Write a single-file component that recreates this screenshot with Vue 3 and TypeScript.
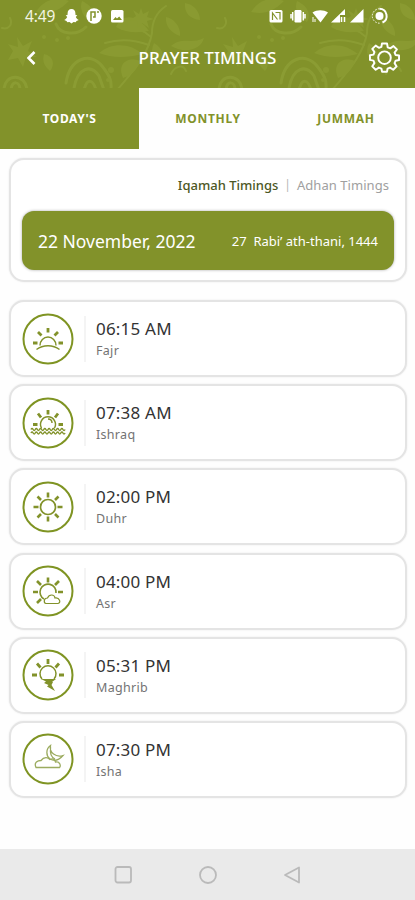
<script setup lang="ts">
import { ref } from 'vue'

type Icon = 'fajr' | 'ishraq' | 'duhr' | 'asr' | 'maghrib' | 'isha'

interface Prayer {
  name: string
  time: string
  icon: Icon
}

const tabs = ["TODAY'S", 'MONTHLY', 'JUMMAH']
const activeTab = ref(0)

const prayers: Prayer[] = [
  { name: 'Fajr', time: '06:15 AM', icon: 'fajr' },
  { name: 'Ishraq', time: '07:38 AM', icon: 'ishraq' },
  { name: 'Duhr', time: '02:00 PM', icon: 'duhr' },
  { name: 'Asr', time: '04:00 PM', icon: 'asr' },
  { name: 'Maghrib', time: '05:31 PM', icon: 'maghrib' },
  { name: 'Isha', time: '07:30 PM', icon: 'isha' },
]
</script>

<template>
  <div class="screen">
    <header class="header">
      <svg class="floral" viewBox="0 0 415 88" aria-hidden="true">
        <defs>
          <g id="floral-tile">
            <g fill="none" stroke="#94a53c" stroke-width="3" stroke-linecap="round">
              <path d="M66 83C70 57 91 52 102 66S111 83 111 90" />
              <path d="M74 88C78 67 91 64 99 76L104 90" />
              <path d="M84 90C87 78 93 79 96 90" />
              <path d="M4 90C4 73 26 73 27 90M11 90C12 80 20 81 20 90" />
              <path d="M56 24C60 35 77 36 86 27" />
              <path d="M118 89C132 72 148 56 152 33C152 21 157 12 166 6" stroke-width="2" />
              <path d="M151 37C142 29 132 25 120 26M149 45C133 39 118 39 105 43" stroke-width="2" />
              <path d="M171 74C174 67 183 63 186 71M2 28C9 30 13 24 10 18" stroke-width="2" />
            </g>
            <g fill="#91a237">
              <path d="M99 53C113 41 131 44 143 54C126 58 112 58 99 53Z" />
              <path d="M123 78C117 65 126 56 140 61C137 70 131 76 123 78Z" />
              <path d="M116 27C124 10 140 18 149 31C137 33 126 33 116 27Z" />
              <path d="M154 43C163 48 165 57 161 64C152 59 150 52 154 43Z" />
              <path d="M166 17C173 18 181 26 180 36C171 33 165 26 166 17Z" />
              <path d="M171 46C183 36 190 45 204 38C201 50 185 54 171 46Z" />
              <path d="M44 54C54 56 55 65 50 71C44 66 42 61 44 54Z" />
              <path d="M17 37L23 46L32 41L28 51L37 57L26 57L23 67L18 58L8 60L13 51L8 44L18 47Z" />
              <path d="M141 8L143 14L149 11L147 17L154 19L147 21L149 28L142 23L138 28L137 21L130 20L136 16L133 10L139 14Z" />
              <path d="M36 12C43 0 56-4 69 1C59 11 49 15 36 12Z" />
              <path d="M82 1C91 5 97 13 92 22C83 18 79 9 82 1Z" />
              <path d="M185 3C193 4 200 11 200 20C190 19 184 13 185 3Z" />
              <circle cx="57" cy="40" r="2" /><circle cx="68" cy="38" r="2" />
              <circle cx="111" cy="70" r="3" /><circle cx="108" cy="80" r="2" />
              <circle cx="44" cy="37" r="2" />
            </g>
          </g>
        </defs>
        <use href="#floral-tile" />
        <use href="#floral-tile" x="215" />
      </svg>

      <div class="status">
        <span class="clock">4:49</span>
        <svg class="status-left" viewBox="0 0 62 18" fill="#fff">
          <path d="M8.500 2C6 2 4.600 3.800 4.600 6.300L4.500 8L2.700 8.300L4.200 10C3.500 11.400 2.600 12.300 1.200 13L3.500 14L4.300 15.200L6.500 15L8.500 16.500L10.500 15L12.700 15.200L13.500 14L15.800 13C14.400 12.300 13.500 11.400 12.800 10L14.300 8.300L12.500 8L12.400 6.300C12.400 3.800 11 2 8.500 2Z" />
          <circle cx="31" cy="9" r="7.700" />
          <path d="M28 14V5H32V10H30M34 5H36" fill="none" stroke="#82922a" stroke-width="1.500" />
          <rect x="48" y="3" width="12.500" height="12.500" rx="1.500" />
          <path d="M50 13L52.500 10L54 11.500L56.200 9.500L59 13Z" fill="#82922a" />
        </svg>
        <svg class="status-right" viewBox="0 0 120 18" fill="#fff">
          <rect x="0.500" y="3" width="13" height="12.500" rx="1.500" />
          <path d="M3.500 13V6L8.500 12.500M6.500 5.500H11V12.500" fill="none" stroke="#82922a" stroke-width="1.200" />
          <rect x="25.500" y="3" width="7" height="12.500" rx="1.200" />
          <path d="M23.700 5V13.500M34.300 5V13.500M22 7V11.500M36 7V11.500" stroke="#fff" stroke-width="1.500" />
          <path d="M43.500 5.500C48 2.600 54.500 2.600 59 5.500L51.500 15.500Z" />
          <path d="M44 10V15M46 12V15" stroke="#fff" />
          <path d="M76 2V8H71V15.500H62Z" />
          <path d="M72.500 10V15M75.500 10V15" stroke="#fff" stroke-width="1.500" />
          <path d="M94.500 2V15.500H81Z" />
          <circle cx="110.500" cy="9" r="4" />
          <path d="M110.500 1.800A7.200 7.200 0 0 1 113.500 15.500" fill="none" stroke="#fff" stroke-width="2" />
          <path d="M110.500 16.200A7.200 7.200 0 0 1 110.500 1.800" fill="none" stroke="#fff" stroke-dasharray="1.500 1.500" />
        </svg>
      </div>

      <div class="title-row">
        <button class="icon-button back" aria-label="Back">
          <svg viewBox="0 0 12 16"><path d="M9.500 2L3.500 8L9.500 14" fill="none" stroke="#fff" stroke-width="2.600" /></svg>
        </button>
        <h1>PRAYER TIMINGS</h1>
        <button class="icon-button gear" aria-label="Settings">
          <svg viewBox="0 0 32 32" fill="none" stroke="#fff" stroke-width="2" stroke-linejoin="round">
            <path d="M13.400 1.500H18.600L19.300 5.500L22 6.600L25.300 4.200L28.800 7.700L26.400 11L27.500 13.400L31 14V18.600L27.500 19.300L26.400 21.800L28.500 25.200L25 28.600L21.700 26.400L19.200 27.400L18.500 30.700H13.500L12.800 27.400L10.200 26.400L6.900 28.600L3.400 25.100L5.600 21.800L4.600 19.200L1 18.500V13.700L4.600 13L5.600 10.400L3.400 7.100L6.900 3.700L10.200 6L12.800 5Z" />
            <circle cx="16" cy="16.200" r="6.500" />
          </svg>
        </button>
      </div>
    </header>

    <nav class="tabs">
      <button
        v-for="(tab, i) in tabs"
        :key="tab"
        class="tab"
        :class="{ active: i === activeTab }"
        @click="activeTab = i"
      >
        <span>{{ tab }}</span>
      </button>
    </nav>

    <main class="content">
      <section class="date-card">
        <div class="switch">
          <span class="iqamah">Iqamah Timings</span>
          <span class="bar">|</span>
          <span class="adhan">Adhan Timings</span>
        </div>
        <div class="date">
          <span class="gregorian">22 November, 2022</span>
          <span class="hijri">27&nbsp; Rabi’ ath-thani, 1444</span>
        </div>
      </section>

      <section class="list">
        <article v-for="p in prayers" :key="p.name" class="prayer">
          <svg class="badge" viewBox="0 0 52 52" fill="none" stroke="#82922a" stroke-width="1.200">
            <circle cx="26" cy="26" r="24.500" stroke="#7f9423" stroke-width="2" />
            <g v-if="p.icon === 'fajr'">
              <path d="M18 32.500A8 8.500 0 0 1 34 32.500M14.500 36.500C21 31.500 31 31.500 37.500 36.500" stroke-width="1.500" />
              <path d="M26 15V19.500M16 19L19.500 22.500M36 19L32.500 22.500M11 30H15.500M36.500 30H41" stroke-width="2.800" />
            </g>
            <g v-else-if="p.icon === 'ishraq'">
              <path d="M19.500 31A7.500 7.500 0 1 1 32.500 31M26 22C29 22 30 24 30 26" stroke-width="1.500" />
              <path d="M26 13V17.500M16 16.500L19 20.500M36 16.500L33 20.500M11 27.500H15.500M36.500 27.500H41" stroke-width="2.800" />
              <path d="M9 32.500q1.060 -2 2.130 0t2.130 0t2.130 0t2.130 0t2.130 0t2.130 0t2.130 0t2.130 0t2.130 0t2.130 0t2.130 0t2.130 0t2.130 0t2.130 0t2.130 0t2.130 0M9 36q1.060 -2 2.130 0t2.130 0t2.130 0t2.130 0t2.130 0t2.130 0t2.130 0t2.130 0t2.130 0t2.130 0t2.130 0t2.130 0t2.130 0t2.130 0t2.130 0t2.130 0" stroke-width="1.400" />
            </g>
            <g v-else-if="p.icon === 'duhr'">
              <circle cx="26" cy="26" r="7.500" stroke-width="1.700" />
              <path d="M26 11.500V16.500M26 35.500V40.500M11.500 26H16.500M35.500 26H40.500M15.500 15.500L19 19M33 33L36.500 36.500M15.500 36.500L19 33M33 19L36.500 15.500" stroke-width="2.600" />
            </g>
            <g v-else-if="p.icon === 'asr'">
              <path d="M22 34A8 8 0 1 1 34 28" stroke-width="1.600" />
              <path d="M24 38.500C21.500 38 21.500 33 25.500 33C27 29 32.500 29 33 33C37.500 32 39.500 38 36 38.500Z" />
              <path d="M26 12.500V17.500M11 27H16M36 27H41M15 16L19 20M37 16L33 20M15 38L19 34" stroke-width="2.600" />
            </g>
            <g v-else-if="p.icon === 'maghrib'">
              <path d="M20 30A8 8 0 1 1 32 30" stroke-width="1.500" />
              <path d="M26 10V15M15 14.500L18.500 18.500M37 14.500L33.500 18.500M10 26H15M37 26H42" stroke-width="2.800" />
              <path d="M19 30H34L30 33H31L29.500 36L33 42L25 37.500L26.500 36L22 34L24 32.500Z" fill="#82922a" stroke="none" />
            </g>
            <g v-else stroke="#9bab5f" stroke-width="1.300">
              <path d="M14 34.500C11.500 29 16 27.500 19 27.500C22 23.500 26 24 28 26.500C32 24.500 33 27.500 33.500 29C38 28 39 33 37.500 34.500Z" />
              <path d="M28.500 12.500C23.500 16 24 23 28 26C33 29 38 26 41 22.500C34 24.500 27 20 28.500 12.500ZM28.500 14C28 21 29 24 33 26" />
            </g>
          </svg>
          <div class="details">
            <strong>{{ p.time }}</strong>
            <span>{{ p.name }}</span>
          </div>
        </article>
      </section>
    </main>

    <footer class="navbar">
      <svg viewBox="0 0 20 20"><rect x="2.500" y="2" width="15.500" height="15.500" rx="2" /></svg>
      <svg viewBox="0 0 20 20"><circle cx="10" cy="10" r="8" /></svg>
      <svg viewBox="0 0 20 20"><path d="M17 2.500V17.500L3 10Z" /></svg>
    </footer>
  </div>
</template>

<style>
body {
  background: #fefefe;
}
</style>

<style scoped>
.screen {
  width: 415px;
  height: 900px;
  display: flex;
  flex-direction: column;
  overflow: hidden;
  background: #fefefe;
  font-family: 'Noto Sans', sans-serif;
}
.screen * {
  box-sizing: border-box;
}
button {
  border: 0;
  padding: 0;
  background: none;
  font: inherit;
}
svg {
  display: block;
}
.header {
  position: relative;
  height: 88px;
  flex: none;
  background: #82922a;
  color: #fff;
}
.floral {
  position: absolute;
  inset: 0;
  width: 415px;
  height: 88px;
  overflow: hidden;
  opacity: 0.55;
}
.status {
  position: relative;
  display: flex;
  align-items: center;
  height: 32px;
  padding: 0 26px 0 25px;
}
.clock {
  width: 38px;
  font-size: 15.5px;
  letter-spacing: -0.1px;
  color: #f3f5e4;
}
.status-left {
  width: 62px;
  height: 18px;
}
.status-right {
  width: 120px;
  height: 18px;
  margin-left: auto;
}
.title-row {
  position: relative;
  display: grid;
  grid-template-columns: 60px 1fr 60px;
  align-items: center;
  height: 51px;
}
h1 {
  margin: 0;
  text-align: center;
  font-size: 17px;
  font-weight: 500;
  letter-spacing: 0;
  white-space: nowrap;
}
.back svg {
  width: 12px;
  height: 16px;
  margin-left: 25px;
}
.gear svg {
  width: 31px;
  height: 31px;
  margin-left: 14px;
}
.tabs {
  display: grid;
  grid-template-columns: 139px 1fr 1fr;
  height: 61px;
  flex: none;
}
.tab {
  color: #82922a;
  font-size: 12px;
  font-weight: 700;
  letter-spacing: 0.7px;
}
.tab.active {
  background: #82922a;
  color: #fff;
  letter-spacing: 0.6px;
}
.content {
  flex: 1;
  padding: 9px 8px 0 9px;
}
.date-card,
.prayer {
  border: 2px solid #e4e4e4;
  border-radius: 15px;
  background: #fff;
  box-shadow: 0 0 2px #e8e8e8;
}
.date-card {
  height: 124px;
  padding: 15px 11px 0;
}
.switch {
  display: flex;
  justify-content: flex-end;
  height: 36px;
  padding-right: 5px;
  line-height: 20px;
  font-size: 13px;
  white-space: nowrap;
}
.iqamah {
  color: #4c5724;
  font-weight: 500;
}
.bar {
  margin: 0 6px;
  color: #b5b5b5;
  font-size: 12px;
}
.adhan {
  color: #a0a0a0;
  letter-spacing: 0.05px;
}
.date {
  display: flex;
  align-items: center;
  justify-content: space-between;
  height: 59px;
  padding: 0 16px;
  border-radius: 12px;
  background: #82922a;
  box-shadow: 0 0 3px #a8a8a8;
  color: #fff;
  white-space: nowrap;
}
.gregorian {
  font-size: 17.5px;
}
.hijri {
  font-size: 13px;
}
.list {
  display: flex;
  flex-direction: column;
  gap: 7.2px;
  margin-top: 18px;
}
.prayer {
  display: flex;
  align-items: center;
  height: 77px;
  padding-left: 11px;
}
.badge {
  width: 52px;
  height: 52px;
  flex: none;
}
.details {
  display: flex;
  flex-direction: column;
  justify-content: center;
  height: 46px;
  margin-left: 10px;
  padding: 2px 0 0 10px;
  border-left: 2px solid #f4f4f4;
}
.details strong {
  color: #333;
  font-size: 17px;
  letter-spacing: 0.2px;
  font-weight: 400;
  line-height: 23px;
}
.details span {
  color: #737373;
  font-size: 12.5px;
  letter-spacing: 0.3px;
  line-height: 22px;
}
.navbar {
  display: flex;
  align-items: center;
  justify-content: center;
  gap: 64.5px;
  height: 51px;
  flex: none;
  background: #eaeaea;
}
.navbar svg {
  width: 20px;
  height: 20px;
  fill: none;
  stroke: #bababa;
  stroke-width: 1.8;
  stroke-linejoin: round;
}
</style>
